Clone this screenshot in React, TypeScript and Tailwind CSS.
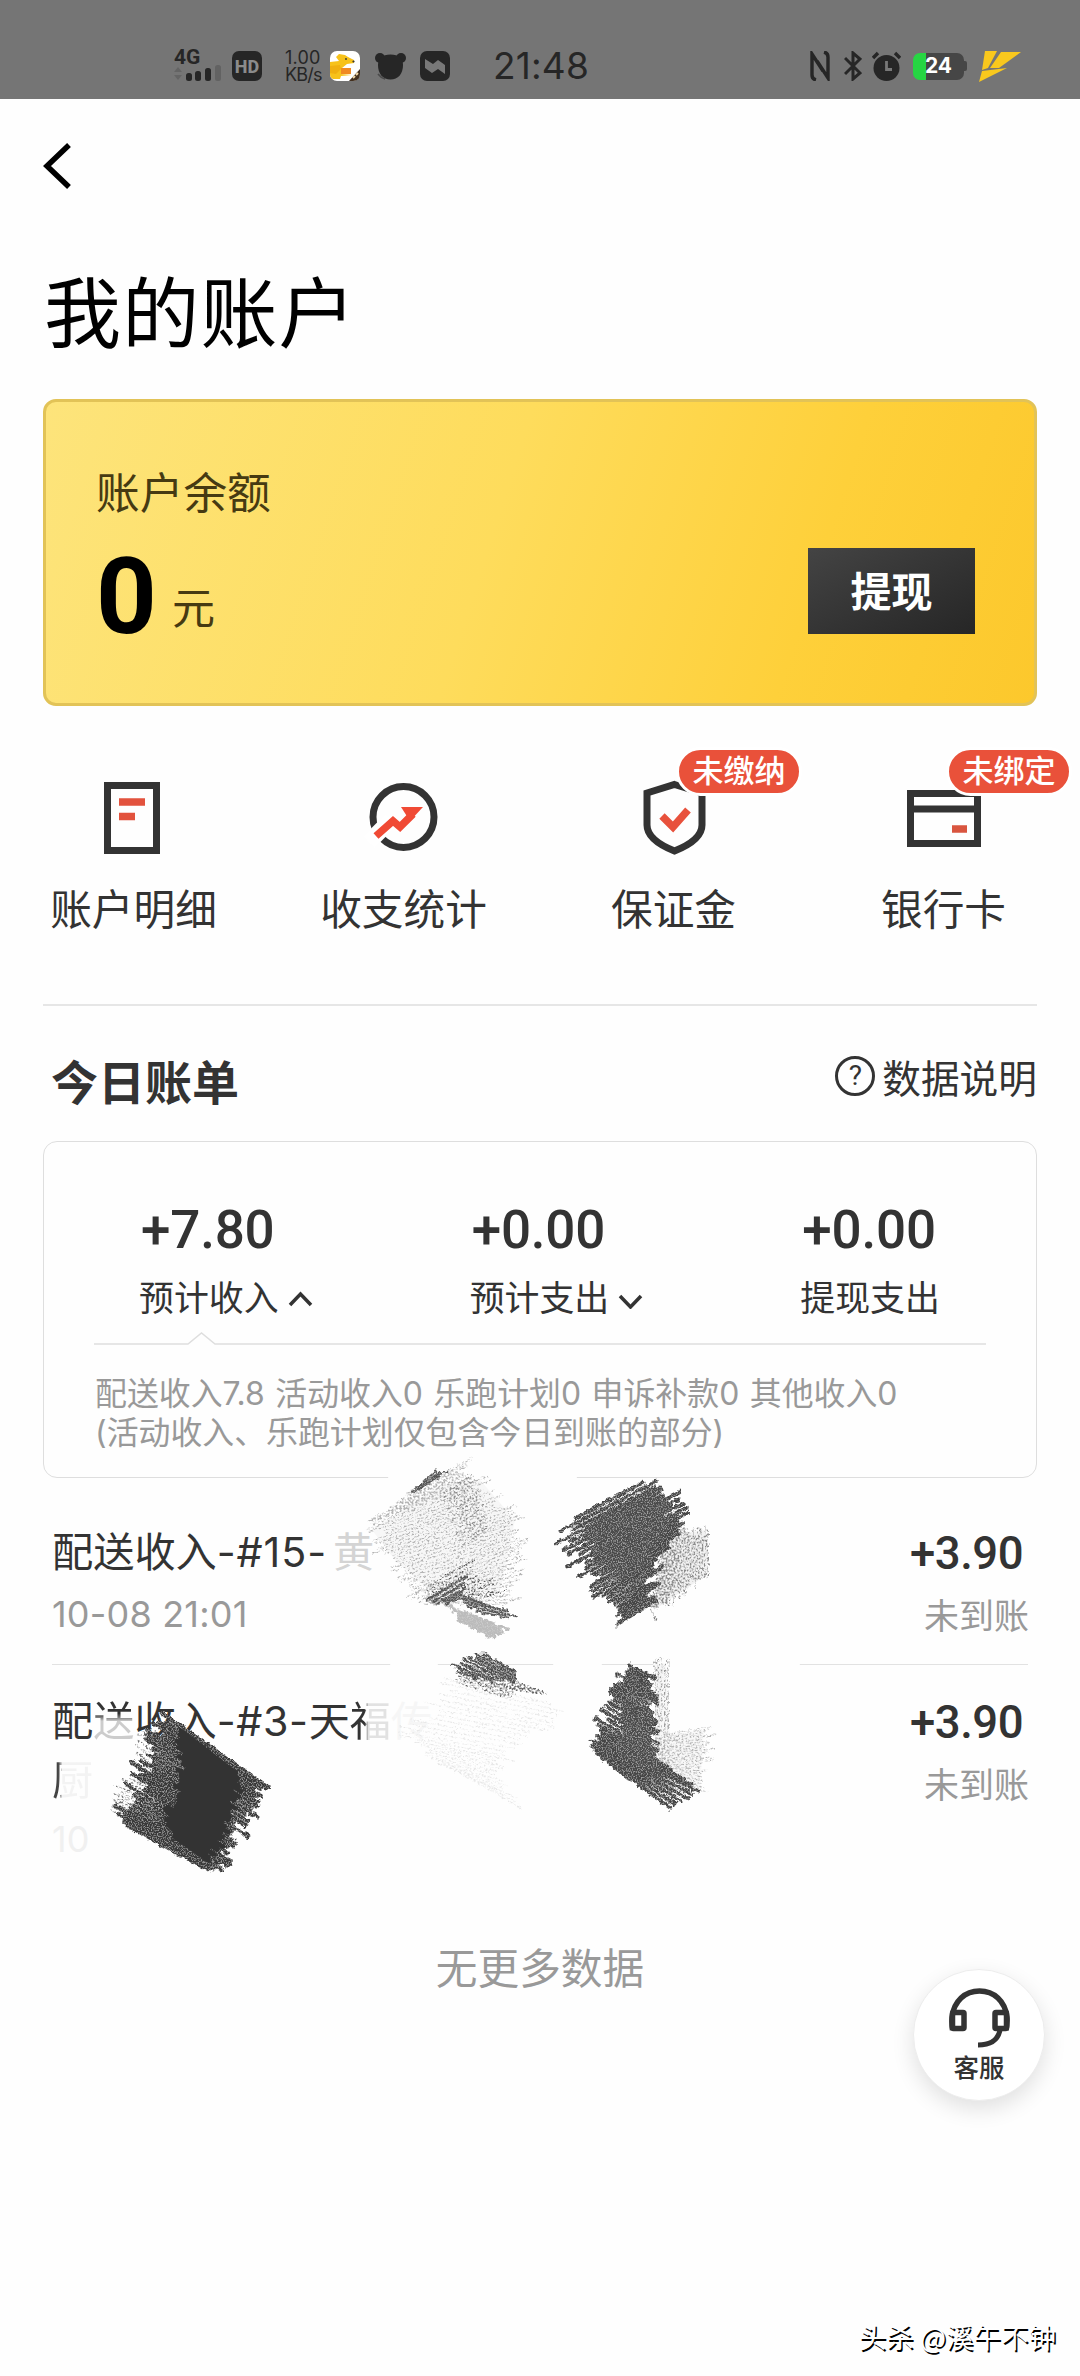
import type { ReactNode } from "react";
import clsx from "clsx";

const CJK = "font-['Noto_Sans_CJK_SC',sans-serif]";
const MIXED = "font-[Inter,'Noto_Sans_CJK_SC',sans-serif]";
const NUM = "font-[Roboto,'Noto_Sans_CJK_SC',sans-serif]";

type Point = [number, number];

function SignalIcon() {
  return (
    <svg width="48" height="17" viewBox="0 0 48 17">
      <path d="M0 7 L4 2 L8 7Z M0 10 L4 15 L8 10Z" fill="#646464" />
      <rect x="12" y="8" width="6" height="8" rx="2.5" fill="#262626" />
      <rect x="21" y="6" width="6" height="10" rx="2.5" fill="#262626" />
      <rect x="31" y="3" width="6" height="13" rx="2.5" fill="#262626" />
      <rect x="41" y="0" width="6" height="16" rx="2.5" fill="#626262" />
    </svg>
  );
}

function KangarooIcon() {
  return (
    <svg width="30" height="30" viewBox="0 0 30 30">
      <rect width="30" height="30" rx="7" fill="#fff" />
      <path d="M0 11 L9 10 L6 6 L9 3 L15 4 L18 6 L24 9 L24 12 L17 13 L12 17 L11 23 L22 24 L11 25 L10 28 H3 Q0 27 0 23Z" fill="#f7c21a" />
      <path d="M0 15 L10 14 L11 18 L6 23 L0 22Z" fill="#f0b010" />
      <path d="M11 17 H21 V23 H11Z" fill="#f08a22" />
      <circle cx="16" cy="8" r="0.9" fill="#333" />
      <circle cx="23.500" cy="10.500" r="1.100" fill="#333" />
      <path d="M30 18 V23 Q30 30 23 30 H19Z" fill="#43301f" />
      <path d="M23 27 l2 -2 M26 24 l2 -2" stroke="#f4d9a8" strokeWidth="2" />
    </svg>
  );
}

function BearIcon() {
  return (
    <svg width="31" height="27" viewBox="0 0 31 27">
      <circle cx="5" cy="5" r="5" fill="#262626" />
      <circle cx="26" cy="5" r="5" fill="#262626" />
      <path d="M15.500 1.500 C24 1.500 28 6 28 12 C28 21 23 26.500 15.500 26.500 C8 26.500 3 21 3 12 C3 6 7 1.500 15.500 1.500Z" fill="#262626" />
      <path d="M3 21 Q6 25 10 26" stroke="#4a4a4a" strokeWidth="1.500" fill="none" />
    </svg>
  );
}

function FlagIcon() {
  return (
    <svg width="30" height="30" viewBox="0 0 30 30">
      <rect width="30" height="30" rx="7" fill="#262626" />
      <path d="M5 8 L13 13 L18 9 L25 14 V23 L18 18 L12 22 L5 17Z" fill="#787878" />
    </svg>
  );
}

function StatusBar() {
  return (
    <header className="flex h-[99px] w-full bg-[#757575] pt-[33px] text-[#262626]">
      <div className="flex h-[66px] w-full items-center pl-[174px]">
        <div className="flex h-[33px] w-12 flex-col">
          <span className="h-[15px] font-[Roboto,sans-serif] text-[21px] leading-[15px] font-bold">4G</span>
          <SignalIcon />
        </div>
        <div className="ml-[10px] flex h-[30px] w-[30px] items-center justify-center rounded-[7px] bg-[#262626] font-[Roboto,sans-serif] text-[18px] font-extrabold text-[#8b8b8b]">
          HD
        </div>
        <div className="ml-[23px] w-[37px] font-[Inter,sans-serif] text-[18px] leading-[17px] tracking-[0.2px]">
          <div>1.00</div>
          <div className="tracking-[-0.8px]">KB/s</div>
        </div>
        <div className="ml-[8px] flex items-center">
          <KangarooIcon />
          <div className="ml-[15px]"><BearIcon /></div>
          <div className="ml-[14px]"><FlagIcon /></div>
        </div>
        <span className="ml-[43px] w-[98px] font-[Inter,sans-serif] text-[37px] leading-[40px] tracking-[0.2px] whitespace-nowrap">21:48</span>
        <div className="ml-[219px] flex items-center">
          <svg width="20" height="30" viewBox="0 0 20 30" fill="none" stroke="#262626" strokeWidth="3.400">
            <path d="M6 29 Q2 28 2 24 V3 L13 20 M14 1 Q18 2 18 6 V27 L7 10" />
          </svg>
          <svg className="ml-[14px]" width="18" height="30" viewBox="0 0 18 30" fill="none" stroke="#262626" strokeWidth="3">
            <path d="M1 7 L16 22 L9 28 V2 L16 8 L1 23" />
          </svg>
          <svg className="ml-[10px]" width="29" height="30" viewBox="0 0 29 30">
            <circle cx="14.500" cy="17" r="13" fill="#262626" />
            <path d="M1 7 L6 2 M28 7 L23 2" stroke="#262626" strokeWidth="3.400" />
            <path d="M14.500 10 V18.500 H20" stroke="#787878" strokeWidth="2.800" fill="none" />
          </svg>
          <div className="ml-[12px] flex items-center">
            <div className="flex h-[27px] w-[51px] items-center justify-center rounded-[7px] bg-[linear-gradient(90deg,#26d643_0_13px,#464646_13px)] font-[Inter,sans-serif] text-[21px] font-bold text-white">24</div>
            <div className="h-[10px] w-[3px] rounded-r-[2px] bg-[#464646]" />
          </div>
          <svg className="ml-[12px]" width="42" height="31" viewBox="0 0 42 31" fill="#f9c81d">
            <path d="M6 0 H18 L9 17 L3 19Z" />
            <path d="M22 1 H42 L20 17 L11 17Z" />
            <path d="M3 20 L28 17 L0 31Z" />
          </svg>
        </div>
      </div>
    </header>
  );
}

function BalanceCard() {
  return (
    <section className="mx-[43px] mt-[45px] flex h-[307px] justify-between rounded-[13px] border-3 border-[#e2c357] bg-[linear-gradient(108deg,#fde47b_0%,#fedc5c_45%,#fed03a_76%,#fcc82c_100%)] pr-[59px] pl-[50px]">
      <div className={clsx("pt-[58px] text-[#463a12]", CJK)}>
        <p className="text-[43.700px] leading-[60px]">账户余额</p>
        <div className="mt-[27px] flex h-[100px] items-center">
          <span className="w-[76px] font-[Roboto,sans-serif] text-[106px] leading-[100px] font-bold text-black">0</span>
          <span className="mt-[15px] text-[43px] leading-[60px]">元</span>
        </div>
      </div>
      <button className={clsx("mt-[146px] h-[86px] w-[167px] bg-linear-to-br from-[#444] to-[#262626] pb-[2px] text-[41px] font-bold text-white", CJK)}>
        提现
      </button>
    </section>
  );
}

const ENTRIES: { label: string; badge?: string; icon: ReactNode }[] = [
  {
    label: "账户明细",
    icon: (
      <>
        <rect x="8.500" y="3.500" width="49" height="65" fill="none" stroke="#333" strokeWidth="7" />
        <path d="M20 20 H46 M20 34.500 H36" stroke="#e2523d" strokeWidth="7.500" />
      </>
    ),
  },
  {
    label: "收支统计",
    icon: (
      <>
        <circle cx="34.500" cy="35" r="30.500" fill="none" stroke="#333" strokeWidth="7" />
        <path d="M0 60 L22 38" stroke="#fff" strokeWidth="16" />
        <path d="M7 54 L24 39 L31 45 L44 32" fill="none" stroke="#f04a35" strokeWidth="7.500" />
        <path d="M32 25 H54 L41 39Z" fill="#f04a35" />
      </>
    ),
  },
  {
    label: "保证金",
    badge: "未缴纳",
    icon: (
      <>
        <path d="M35.500 2.500 L63 11 V43 Q63 58 35.500 69 Q8 58 8 43 V11Z" fill="none" stroke="#333" strokeWidth="7" />
        <path d="M23 34 L34 45 L49 28" fill="none" stroke="#e8513c" strokeWidth="7.500" />
      </>
    ),
  },
  {
    label: "银行卡",
    badge: "未绑定",
    icon: (
      <>
        <path d="M1.500 11.500 H68.500 V61.500 H1.500Z M1.500 27 H68.500" fill="none" stroke="#333" strokeWidth="7" />
        <path d="M43 47 H58" stroke="#d9553f" strokeWidth="7.500" />
      </>
    ),
  },
];

function EntryGrid() {
  return (
    <nav className="grid h-[298px] grid-cols-4 pt-[76px]">
      {ENTRIES.map((e) => (
        <div key={e.label} className="relative flex flex-col items-center">
          <svg className="overflow-visible" width="72" height="72" viewBox="0 0 72 72">
            {e.icon}
          </svg>
          {e.badge && (
            <span className={clsx("absolute -top-[35px] left-[136px] flex h-[49px] w-[126px] items-center justify-center rounded-full border-3 border-white bg-[#e9513a] pb-[5px] text-[31px] leading-[40px] font-medium text-white", CJK)}>
              {e.badge}
            </span>
          )}
          <span className={clsx("mt-[23px] mr-[3px] text-[41.700px] leading-[60px] text-[#333]", CJK)}>{e.label}</span>
        </div>
      ))}
    </nav>
  );
}

const SUMMARY = [
  { amount: "+7.80", label: "预计收入", arrow: "M2 14 L12.500 3 L23 14" },
  { amount: "+0.00", label: "预计支出", arrow: "M2 5 L12.500 16 L23 5" },
  { amount: "+0.00", label: "提现支出" },
];

function TodayBill() {
  return (
    <section className="mx-[43px]">
      <div className="h-[2px] bg-[#e6e6e6]" />
      <div className={clsx("flex h-[135px] items-center justify-between text-[#333]", CJK)}>
        <h2 className="mt-[13px] ml-[8px] text-[47px] leading-[60px] font-bold">今日账单</h2>
        <div className="mt-[4px] flex items-center text-[38.700px] leading-[50px]">
          <span className="mr-[7px] flex h-[40px] w-[40px] items-center justify-center rounded-full border-3 border-[#333] font-[Roboto,sans-serif] text-[28px] leading-none">?</span>
          数据说明
        </div>
      </div>
      <div className="h-[337px] rounded-[14px] border-[1.500px] border-[#dedede] pt-[60px]">
        <div className="grid grid-cols-3 text-[#333]">
          {SUMMARY.map((s) => (
            <div key={s.label} className="pl-[95px]">
              <p className={clsx("ml-[2px] text-[53px] leading-[56px] font-medium tracking-[-0.200px]", NUM)}>{s.amount}</p>
              <p className={clsx("mt-[16px] flex items-center text-[34.900px] leading-[44px]", CJK)}>
                {s.label}
                {s.arrow && (
                  <svg className="mt-[8px] ml-[9px]" width="25" height="18" viewBox="0 0 25 18" fill="none" stroke="#333" strokeWidth="3.500">
                    <path d={s.arrow} />
                  </svg>
                )}
              </p>
            </div>
          ))}
        </div>
        <div className="mx-[50px] mt-[14px]">
          <svg className="block" width="892" height="15" viewBox="0 0 892 15" fill="none" stroke="#dedede" strokeWidth="1.500">
            <path d="M0 12 H94 L107.500 1 L121 12 H892" />
          </svg>
          <div className={clsx("mt-[28px] ml-[1px] text-[31.900px] leading-[38.600px] whitespace-nowrap text-[#999]", MIXED)}>
            <p className="[word-spacing:1.5px]">配送收入7.8 活动收入0 乐跑计划0 申诉补款0 其他收入0</p>
            <p>(活动收入、乐跑计划仅包含今日到账的部分)</p>
          </div>
        </div>
      </div>
    </section>
  );
}

function BillAmount() {
  return (
    <div className="flex flex-col items-end">
      <span className={clsx("mt-[2px] mr-[5px] text-[45.500px] leading-[52px] font-medium tracking-[-0.500px]", NUM)}>+3.90</span>
      <span className={clsx("mt-[12px] -mr-[1px] text-[35px] leading-[44px] text-[#999]", CJK)}>未到账</span>
    </div>
  );
}

function BillList() {
  return (
    <section className="mx-[52px] pt-[18px] text-[#333]">
      <div className="flex h-[169px] justify-between border-b-[1.500px] border-[#e2e2e2] pt-[30px]">
        <div className={MIXED}>
          <p className="text-[41.200px] leading-[52px]">
            配送收入<span className="tracking-[0.900px]">-#15-</span>
            <span className="ml-[6px] text-[#d4d4d4]">黄</span>
          </p>
          <p className="mt-[14px] text-[36px] leading-[44px] tracking-[0.200px] text-[#999]">10-08 21:01</p>
        </div>
        <BillAmount />
      </div>
      <div className="flex h-[271px] justify-between pt-[30px]">
        <div className={MIXED}>
          <p className="text-[41.200px] leading-[52px]">
            配<span className="bg-linear-to-b from-[#333] from-35% to-[#ccc] to-50% bg-clip-text text-transparent">送</span>
            收入<span className="tracking-[0.600px]">-#3-</span>天
            <span className="bg-linear-to-r from-[#333] from-35% to-[#e2e2e2] to-45% bg-clip-text text-transparent">福</span>
            <span className="text-[#f6f6f6]">传</span>
          </p>
          <p className="mt-[7px] w-[42px] bg-linear-to-r from-[#444] from-15% to-[#f3f3f3] to-25% bg-clip-text text-[41.200px] leading-[52px] text-transparent">厨</p>
          <p className="mt-[11px] text-[36px] leading-[44px] text-[#f0f0f0]">10</p>
        </div>
        <BillAmount />
      </div>
    </section>
  );
}

// small seeded generator so the strokes stay the same on every render
function makeRandom(seed: number) {
  let s = seed * 7919;
  return () => {
    s = (s * 16807) % 2147483647;
    return s / 2147483647;
  };
}

function along(points: Point[], t: number): Point {
  const pos = t * (points.length - 1);
  const i = Math.min(Math.floor(pos), points.length - 2);
  const f = pos - i;
  return [
    points[i][0] + (points[i + 1][0] - points[i][0]) * f,
    points[i][1] + (points[i + 1][1] - points[i][1]) * f,
  ];
}

function hatch(left: Point[], right: Point[], count: number, jitter: number, seed: number) {
  const rnd = makeRandom(seed);
  let d = "";
  for (let i = 0; i < count; i++) {
    const t = i / (count - 1);
    const a = along(left, t);
    const b = along(right, t);
    const p = (rnd() - 0.5) * jitter;
    const q = (rnd() - 0.5) * jitter;
    const dx = b[0] - a[0];
    const dy = b[1] - a[1];
    const len = Math.hypot(dx, dy) || 1;
    d += `M${(a[0] + (dx / len) * p).toFixed(1)} ${(a[1] + (dy / len) * p).toFixed(1)}L${(b[0] + (dx / len) * q).toFixed(1)} ${(b[1] + (dy / len) * q).toFixed(1)}`;
  }
  return d;
}

const DARK = [
  {
    d: hatch(
      [[572, 1520], [562, 1547], [576, 1566], [592, 1580], [606, 1596], [626, 1604], [621, 1622]],
      [[650, 1479], [670, 1493], [687, 1512], [682, 1532], [660, 1556], [651, 1583], [649, 1604]],
      27, 22, 11,
    ),
    color: "#444",
    w: 3.8,
  },
  { d: hatch([[590, 1524], [590, 1550], [620, 1580]], [[655, 1490], [670, 1515], [652, 1560]], 18, 14, 77), color: "#4c4c4c", w: 4 },
  {
    d: hatch(
      [[630, 1666], [620, 1680], [612, 1700], [599, 1724], [595, 1742], [602, 1758]],
      [[650, 1676], [652, 1696], [653, 1725], [655, 1758], [694, 1788], [668, 1806]],
      27, 14, 23,
    ),
    color: "#444",
    w: 4,
  },
  { d: hatch([[630, 1680], [622, 1720], [620, 1752]], [[652, 1692], [653, 1740], [660, 1778]], 15, 8, 78), color: "#4c4c4c", w: 4 },
  {
    d: hatch(
      [[167, 1717], [149, 1737], [142, 1763], [137, 1783], [120, 1808], [136, 1830]],
      [[258, 1780], [252, 1799], [241, 1824], [231, 1848], [220, 1861], [205, 1868]],
      32, 26, 37,
    ),
    color: "#383838",
    w: 4,
  },
  { d: hatch([[485, 1655], [462, 1656], [455, 1671]], [[518, 1674], [512, 1682], [478, 1678]], 8, 12, 5), color: "#4c4c4c", w: 2.6 },
  { d: hatch([[426, 1601], [432, 1606], [450, 1602]], [[464, 1578], [466, 1588], [460, 1598]], 5, 12, 9), color: "#555", w: 2.6 },
  { d: hatch([[458, 1594], [462, 1602], [480, 1612]], [[488, 1606], [512, 1612], [509, 1618]], 5, 12, 15), color: "#555", w: 2.4 },
  { d: hatch([[413, 1492], [424, 1485]], [[437, 1470], [446, 1472]], 3, 4, 2), color: "#555", w: 2.2 },
];

const LIGHT = [
  {
    d: hatch(
      [[413, 1490], [372, 1522], [382, 1556], [414, 1592], [432, 1604]],
      [[463, 1463], [482, 1484], [515, 1515], [522, 1550], [515, 1604]],
      46, 20, 71,
    ),
    color: "#b4b4b4",
    w: 1.6,
  },
  { d: hatch([[443, 1494], [456, 1516], [464, 1545]], [[472, 1476], [480, 1500], [486, 1530]], 18, 10, 41), color: "#8d8d8d", w: 1.6 },
  { d: hatch([[425, 1588], [445, 1596], [470, 1602]], [[470, 1562], [485, 1580], [500, 1592]], 10, 14, 46), color: "#555", w: 1.6 },
  { d: hatch([[663, 1537], [660, 1560], [652, 1612]], [[664, 1590], [684, 1590], [655, 1618]], 5, 8, 61), color: "#777", w: 1.8 },
  { d: hatch([[665, 1536], [680, 1530], [708, 1532]], [[650, 1610], [672, 1600], [708, 1572]], 24, 12, 8), color: "#8c8c8c", w: 1.9 },
  { d: hatch([[655, 1662], [668, 1664]], [[656, 1765], [668, 1772]], 5, 12, 52), color: "#999", w: 1.6 },
  { d: hatch([[658, 1735], [656, 1760], [670, 1780]], [[706, 1728], [710, 1756], [700, 1790]], 22, 16, 29), color: "#b5b5b5", w: 1.6 },
  { d: hatch([[466, 1664], [458, 1672], [455, 1682]], [[548, 1694], [515, 1690], [508, 1697]], 10, 10, 33), color: "#666", w: 1.6 },
  { d: hatch([[142, 1730], [136, 1768], [118, 1790], [116, 1812]], [[158, 1742], [152, 1780], [142, 1800], [138, 1822]], 20, 10, 44), color: "#777", w: 2 },
];

const FAINT = hatch(
  [[452, 1680], [430, 1710], [405, 1735], [430, 1758], [470, 1778]],
  [[555, 1705], [540, 1730], [510, 1755], [500, 1775], [512, 1803]],
  26, 24, 19,
);

function Scribbles() {
  return (
    <svg className="pointer-events-none absolute top-[1440px] left-0" width="1080" height="460" viewBox="0 1440 1080 460" fill="none" strokeLinecap="round">
      <defs>
        <filter id="charcoal" filterUnits="userSpaceOnUse" x="0" y="1440" width="1080" height="460">
          <feTurbulence type="fractalNoise" baseFrequency="0.22" numOctaves="2" seed="4" result="wave" />
          <feDisplacementMap in="SourceGraphic" in2="wave" scale="6" xChannelSelector="R" yChannelSelector="G" result="rough" />
          <feTurbulence type="fractalNoise" baseFrequency="0.8" numOctaves="2" seed="9" />
          <feColorMatrix values="0 0 0 0 0.75  0 0 0 0 0.75  0 0 0 0 0.75  4 0 0 0 -1.9" result="specks" />
          <feComposite in="specks" in2="rough" operator="in" result="grain" />
          <feComponentTransfer in="grain" result="softGrain">
            <feFuncA type="linear" slope="0.4" />
          </feComponentTransfer>
          <feMerge>
            <feMergeNode in="rough" />
            <feMergeNode in="softGrain" />
          </feMerge>
        </filter>
        <filter id="pencil" filterUnits="userSpaceOnUse" x="0" y="1440" width="1080" height="460">
          <feTurbulence type="fractalNoise" baseFrequency="0.25" numOctaves="2" seed="6" result="wave" />
          <feDisplacementMap in="SourceGraphic" in2="wave" scale="5" xChannelSelector="R" yChannelSelector="G" result="rough" />
          <feTurbulence type="fractalNoise" baseFrequency="0.5" numOctaves="2" seed="12" />
          <feColorMatrix values="0 0 0 0 0  0 0 0 0 0  0 0 0 0 0  5 0 0 0 -2.1" result="mask" />
          <feComposite in="rough" in2="mask" operator="in" />
        </filter>
      </defs>
      {/* rubbed-out stretches of the borders */}
      <path d="M390 1477 H575 M392 1664 H436 M555 1664 H600 M655 1664 H798" stroke="#fefefe" strokeWidth="4" />
      <path d="M372 1530 L395 1560 L440 1600 L500 1590 L515 1520 L480 1480 L440 1485Z" fill="#f7f7f7" />
      <path d="M664 1536 L706 1530 L708 1574 L654 1610Z" fill="#f2f2f2" />
      <path d="M655 1664 L666 1664 L670 1735 L704 1730 L700 1788 L656 1762Z" fill="#f8f8f8" />
      <g filter="url(#pencil)">
        {LIGHT.map((s, i) => (
          <path key={i} d={s.d} stroke={s.color} strokeWidth={s.w} />
        ))}
        <path d={FAINT} stroke="#e8e8e8" strokeWidth="1.500" />
      </g>
      <g filter="url(#charcoal)">
        <path d={hatch([[448, 1606], [458, 1620], [482, 1632]], [[505, 1628], [495, 1634], [490, 1638]], 8, 8, 3)} stroke="#bbb" strokeWidth="3" />
        {DARK.map((s, i) => (
          <path key={i} d={s.d} stroke={s.color} strokeWidth={s.w} />
        ))}
      </g>
      {/* second, heavier pass over the middle of the last scribble */}
      <path
        d={hatch([[180, 1730], [182, 1775], [170, 1810], [172, 1835]], [[238, 1775], [232, 1805], [222, 1838], [205, 1858]], 30, 14, 90)}
        stroke="#333"
        strokeWidth="4.500"
      />
    </svg>
  );
}

function ServiceButton() {
  return (
    <button className="absolute top-[1969px] left-[913px] flex h-[132px] w-[132px] flex-col items-center rounded-full border border-[#ededed] bg-white pt-[18px] shadow-[0_8px_22px_rgba(0,0,0,0.12)]">
      <svg width="61" height="60" viewBox="0 0 61 60" fill="none" stroke="#333">
        <path d="M3.500 42 Q2.500 36 3 29 C5 13 16 3 30.500 3 C45 3 56 13 58 29 Q58.500 36 57 42" strokeWidth="5.500" />
        <rect x="3.500" y="24.500" width="11.500" height="16" rx="1" strokeWidth="5.500" />
        <rect x="46" y="24.500" width="11.500" height="16" rx="1" strokeWidth="5.500" />
        <path d="M51 42 Q48 57 29 57" strokeWidth="5" />
      </svg>
      <span className={clsx("mt-[2px] text-[25.500px] leading-[32px] font-medium text-[#333]", CJK)}>客服</span>
    </button>
  );
}

export default function App() {
  return (
    <div className="relative h-[2376px] w-[1080px] overflow-hidden bg-[#fefefe]">
      <StatusBar />
      <div className="h-[165px] pt-[44px] pl-[43px]">
        <svg width="28" height="46" viewBox="0 0 28 46" fill="none" stroke="#000" strokeWidth="5.500">
          <path d="M26 2 L4 23 L26 44" />
        </svg>
      </div>
      <h1 className={clsx("h-[90px] pl-[44px] text-[77px] leading-[90px] tracking-[1.200px] text-black", CJK)}>我的账户</h1>
      <BalanceCard />
      <EntryGrid />
      <TodayBill />
      <BillList />
      <p className={clsx("text-center text-[41.700px] leading-[60px] text-[#999]", CJK)}>无更多数据</p>
      <Scribbles />
      <ServiceButton />
      <div className={clsx("absolute top-[2316px] right-[24px] text-[27.500px] leading-[40px] whitespace-nowrap text-white [text-shadow:1.5px_1.5px_0_#000]", CJK)}>
        头杀 @溪午不钟
      </div>
    </div>
  );
}
